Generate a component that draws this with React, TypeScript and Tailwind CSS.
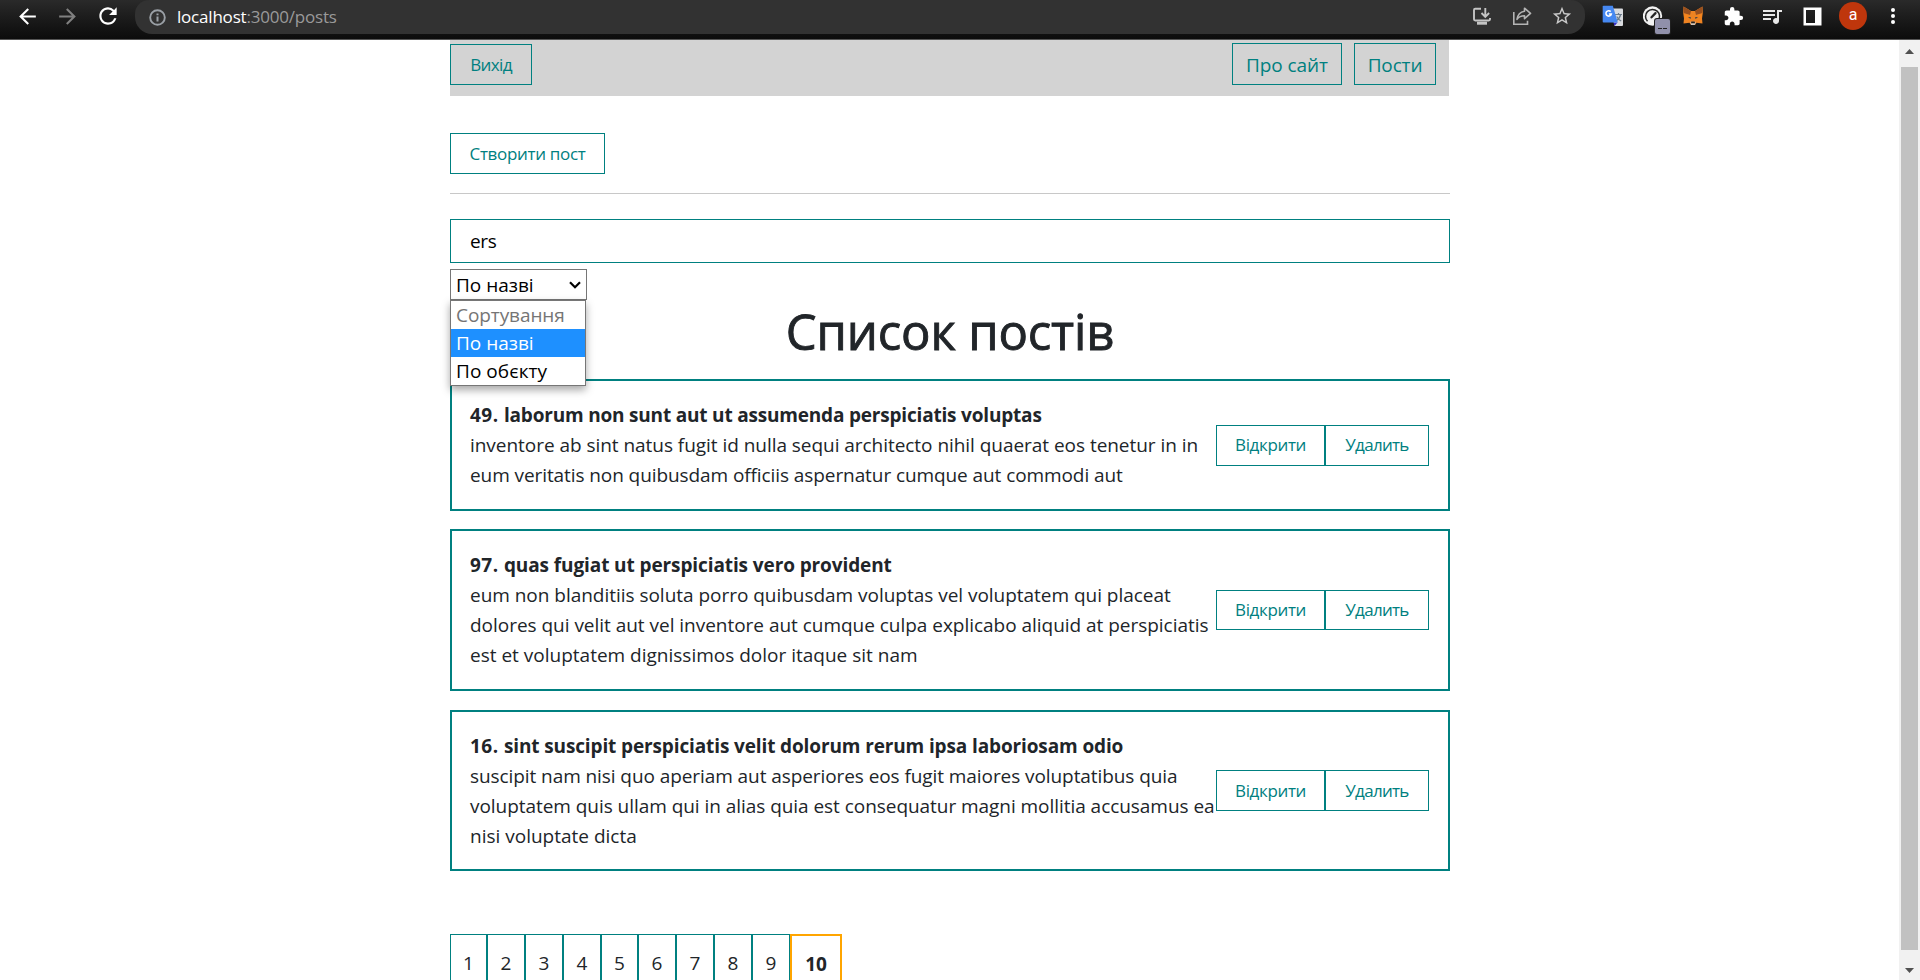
import type { ReactNode } from 'react'
import { MdArrowBack, MdArrowForward, MdExtension, MdQueueMusic, MdRefresh, MdStarOutline } from 'react-icons/md'

type Line = { text: string; tracking: string }
type Post = { id: number; title: Line; body: Line[]; box: string; button: string }

const posts: Post[] = [
  {
    id: 49,
    title: { text: 'laborum non sunt aut ut assumenda perspiciatis voluptas', tracking: 'tracking-[-0.190px]' },
    body: [
      { text: 'inventore ab sint natus fugit id nulla sequi architecto nihil quaerat eos tenetur in in', tracking: 'tracking-[-0.041px]' },
      { text: 'eum veritatis non quibusdam officiis aspernatur cumque aut commodi aut', tracking: 'tracking-[-0.084px]' },
    ],
    box: 'h-[132px]',
    button: 'h-[41px]',
  },
  {
    id: 97,
    title: { text: 'quas fugiat ut perspiciatis vero provident', tracking: 'tracking-[-0.100px]' },
    body: [
      { text: 'eum non blanditiis soluta porro quibusdam voluptas vel voluptatem qui placeat', tracking: 'tracking-[-0.026px]' },
      { text: 'dolores qui velit aut vel inventore aut cumque culpa explicabo aliquid at perspiciatis', tracking: 'tracking-[-0.026px]' },
      { text: 'est et voluptatem dignissimos dolor itaque sit nam', tracking: 'tracking-normal' },
    ],
    box: 'mt-[18px] h-[162px]',
    button: 'h-[40px]',
  },
  {
    id: 16,
    title: { text: 'sint suscipit perspiciatis velit dolorum rerum ipsa laboriosam odio', tracking: 'tracking-[-0.125px]' },
    body: [
      { text: 'suscipit nam nisi quo aperiam aut asperiores eos fugit maiores voluptatibus quia', tracking: 'tracking-[-0.077px]' },
      { text: 'voluptatem quis ullam qui in alias quia est consequatur magni mollitia accusamus ea', tracking: 'tracking-[-0.047px]' },
      { text: 'nisi voluptate dicta', tracking: 'tracking-normal' },
    ],
    box: 'mt-[19px] h-[161px]',
    button: 'h-[41px]',
  },
]

function Slot({ children }: { children: ReactNode }) {
  return <div className="flex h-8 w-10 shrink-0 items-center justify-center">{children}</div>
}

function BrowserBar() {
  return (
    <header className="flex h-10 shrink-0 items-start border-b border-[#555555] bg-linear-to-b from-[#2a2a2a] to-[#0c0c0c] pl-[8px]">
      <Slot><MdArrowBack className="mr-[2px] size-[25px] text-white" /></Slot>
      <Slot><MdArrowForward className="mr-[2px] size-[25px] text-[#808080]" /></Slot>
      <Slot><MdRefresh className="size-[26px] text-white" /></Slot>
      <div className="ml-[7px] flex h-[34px] w-[1450px] items-center rounded-b-[17px] rounded-tl-[14px] rounded-tr-[14px] bg-[#323232] pr-[3px] pl-[14px]">
        <svg className="size-[17px]" viewBox="0 0 17 17" fill="none">
          <circle cx="8.5" cy="8.5" r="7.3" stroke="#9aa0a6" strokeWidth="1.9" />
          <path d="M8.5 7.6v4.9M8.5 4.4v1.9" stroke="#9aa0a6" strokeWidth="2" />
        </svg>
        <div className="ml-[11px] flex-1 text-[17px] leading-[34px] tracking-[-0.2px] text-white">
          localhost<span className="text-[#9a9a9a]">:3000/posts</span>
        </div>
        <div className="flex h-[34px] items-start">
          <Slot>
            <svg className="size-5" viewBox="0 0 20 20" fill="none" stroke="#c4c4c4" strokeWidth="1.9">
              <path d="M9 2.700H3.200Q2 2.700 2 4v9.300q0 1.200 1.200 1.200h13.600q1.200 0 1.200-1.200V12" />
              <path d="M13.300 2v8M9.500 7l3.800 3.800L17.100 7" />
              <path d="M5 17.200h10" strokeWidth="3" />
            </svg>
          </Slot>
          <Slot>
            <svg className="size-5" viewBox="0 0 20 20" fill="none" stroke="#b4b4b4" strokeWidth="1.600">
              <path d="M1.800 6v12.200h13.700v-3.400" />
              <path d="M12.500 2.200l6 5.200-6 5.300V9.800c-3.300 0-5.700 1-7.500 3.600.6-4.300 3.300-7.600 7.500-8.200z" strokeLinejoin="round" />
            </svg>
          </Slot>
          <Slot><MdStarOutline className="size-[22px] text-[#c9c9c9]" /></Slot>
        </div>
      </div>
      <div className="ml-[8px] flex">
        <Slot>
          <svg className="size-[22px]" viewBox="0 0 22 22">
            <path d="M9 3.500h11q1 0 1 1v15.500q0 1-1 1h-7.500z" fill="#d8dade" />
            <path d="M13 9.500h7M16.500 8v1.500M18.700 9.500c-.7 3-2.500 5-5 6.500M14.700 11.500c1 2 2.500 3.500 4.500 4.500" stroke="#6d7c8c" strokeWidth="1.200" fill="none" />
            <path d="M11.500 17.500h4l-3 3.500z" fill="#3730c8" />
            <path d="M1.500.8h9.300l5 16.700H1.500q-.8 0-.8-.8V1.600q0-.8.800-.8z" fill="#4688f1" />
            <path d="M8.700 6.600A2.700 2.700 0 1 0 9.300 9H6.900" stroke="#fff" strokeWidth="1.600" fill="none" />
          </svg>
        </Slot>
        <div className="relative">
          <Slot>
            <svg className="size-5" viewBox="0 0 20 20">
              <circle cx="9.500" cy="10" r="9.700" fill="#f1f1f1" />
              <path d="M4.500 15.300a7 7 0 1 1 10.500-.5" stroke="#252525" strokeWidth="1.500" fill="none" />
              <path d="M8.500 11.300l4-4.200" stroke="#252525" strokeWidth="2.300" strokeLinecap="round" />
            </svg>
          </Slot>
          <div className="absolute top-[19px] left-[22px] flex h-[15px] w-[15px] items-center justify-center gap-[1.500px] rounded-[2px] bg-[#9090aa] pt-[4px] ring-1 ring-[#202020]">
            <span className="h-[1.500px] w-[3.500px] bg-[#222222]" />
            <span className="h-[1.500px] w-[3.500px] bg-[#222222]" />
          </div>
        </div>
        <Slot>
          <svg className="h-5 w-5" viewBox="0 0 20 20">
            <path d="M.5.500l7.500 4.500h4L19.500.500l.3 6.500-.8 5.500.5 5-6-.7-1.500 2.200H8l-1.500-2.200-6 .7.500-5L.200 7z" fill="#ee8322" />
            <path d="M.5.500l7.500 4.500-1 4L.700 7zM19.500.500L12 5l1 4 6.300-2z" fill="#99501f" />
            <path d="M1.300 8.500l5.700.5-5 3.500zM18.700 8.500L13 9l5 3.500z" fill="#f6851b" />
            <path d="M5 11l3 .3-.6 1.700zM15 11l-3 .3.600 1.700z" fill="#3b3f46" />
            <path d="M7.300 15.800h5.400l-.7 3.200H8z" fill="#d5c4b6" />
            <path d="M8.300 15.500h3.400l.3 1.700H8z" fill="#28221e" />
          </svg>
        </Slot>
        <Slot><MdExtension className="size-[21px] text-white" /></Slot>
        <Slot><MdQueueMusic className="mr-[2px] size-[24px] text-[#e8e8e8]" /></Slot>
        <Slot>
          <svg className="mr-px size-[19px]" viewBox="0 0 19 19">
            <path d="M.5.500h18v18H.5zM3 3v13h9V3z" fill="#fff" fillRule="evenodd" />
          </svg>
        </Slot>
        <Slot>
          <div className="flex size-7 items-center justify-center rounded-full bg-[#bf360c] pb-[2px] font-[Roboto] text-[16px] leading-none text-white">a</div>
        </Slot>
        <Slot>
          <svg className="mr-px h-5 w-1" viewBox="0 0 4 20" fill="#fff">
            <circle cx="2" cy="4" r="2" />
            <circle cx="2" cy="10" r="2" />
            <circle cx="2" cy="16" r="2" />
          </svg>
        </Slot>
      </div>
    </header>
  )
}

function SortSelect() {
  return (
    <div className="relative mt-[6px] h-[31px] w-[137px] border border-[#767676] bg-white pl-[5px] text-black">
      <div className="flex items-center justify-between pr-[5px] leading-[31px]">
        <span>По назві</span>
        <svg className="-mt-[2px] h-[8px] w-[12px]" viewBox="0 0 12 8" fill="none">
          <path d="M1 1.300l5 5 5-5" stroke="#000" strokeWidth="2.200" />
        </svg>
      </div>
      <div className="absolute top-[30px] -left-px w-[136px] border border-[#767676] bg-white leading-[28px] shadow-[0_4px_8px_rgba(0,0,0,0.35)]">
        <div className="h-[28px] pl-[5px] tracking-[-0.078px] text-[#757575]">Сортування</div>
        <div className="h-[28px] bg-[#1e90ff] pl-[5px] text-white">По назві</div>
        <div className="h-[28px] pl-[5px] tracking-[0.055px]">По обєкту</div>
      </div>
    </div>
  )
}

function PostItem({ post }: { post: Post }) {
  return (
    <article className={`flex items-center justify-between border-2 border-[#008080] pr-[19px] pl-[18px] ${post.box}`}>
      <div className="w-0 leading-[30px] whitespace-nowrap">
        <div className={`font-bold ${post.title.tracking}`}>
          <span className="tracking-[0.450px]">{post.id}. </span>
          {post.title.text}
        </div>
        {post.body.map((line) => (
          <div key={line.text} className={line.tracking}>{line.text}</div>
        ))}
      </div>
      <div className="flex text-[17px] text-[#008080]">
        <button className={`w-[109px] border border-[#008080] tracking-[-0.360px] ${post.button}`}>Відкрити</button>
        <button className={`w-[104px] border border-[#008080] tracking-[-0.700px] ${post.button}`}>Удалить</button>
      </div>
    </article>
  )
}

function Pagination() {
  const pages = [1, 2, 3, 4, 5, 6, 7, 8, 9]
  return (
    <nav className="mt-[63px] flex h-[70px] text-center leading-[56px]">
      {pages.map((page) => (
        <span key={page} className={`border border-[#008080] ${page === 1 || page === 5 ? 'w-[37px]' : 'w-[38px]'}`}>{page}</span>
      ))}
      <span className="w-[52px] border-2 border-[#ffa500] font-bold">10</span>
    </nav>
  )
}

function Scrollbar() {
  return (
    <div className="flex w-[21px] shrink-0 flex-col items-center bg-[#f1f1f1]">
      <div className="flex h-[27px] items-center pb-[4px]">
        <svg className="h-[5px] w-[9px]" viewBox="0 0 9 5"><path d="M4.500 0L9 5H0z" fill="#505050" /></svg>
      </div>
      <div className="h-[883px] w-[17px] bg-[#c1c1c1]" />
      <div className="flex h-[30px] items-center pt-[11px]">
        <svg className="h-[5px] w-[9px]" viewBox="0 0 9 5"><path d="M0 0h9L4.500 5z" fill="#505050" /></svg>
      </div>
    </div>
  )
}

export default function App() {
  return (
    <div className="flex h-[980px] w-[1920px] flex-col overflow-hidden bg-white font-['Open_Sans',sans-serif] text-[19px] text-[#212529]">
      <BrowserBar />
      <div className="flex min-h-0 flex-1">
        <main className="flex-1 overflow-hidden pl-[450px]">
          <div className="w-[1000px]">
            <nav className="flex h-14 w-[999px] items-start justify-between bg-[#d3d3d3] pt-[3px] pr-[13px] text-[#008080]">
              <button className="mt-px h-[41px] w-[82px] border border-[#008080] text-[17px] tracking-[-0.600px]">Вихід</button>
              <div className="flex gap-3">
                <a className="h-[42px] w-[110px] border border-[#008080] text-center leading-[42px] tracking-[-0.080px]">Про сайт</a>
                <a className="h-[42px] w-[82px] border border-[#008080] text-center leading-[42px] tracking-[-0.150px]">Пости</a>
              </div>
            </nav>
            <button className="mt-[37px] block h-[41px] w-[155px] border border-[#008080] text-[17px] tracking-[-0.320px] text-[#008080]">Створити пост</button>
            <div className="mt-[19px] h-px bg-[#c8c8c8]" />
            <div className="mt-[25px] h-[44px] border border-[#008080] pl-[19px] leading-[43px] tracking-[-0.300px] text-black">ers</div>
            <SortSelect />
            <h1 className="h-[79px] pt-px text-center text-[49px] leading-[60px] font-medium tracking-[-0.150px] [-webkit-text-stroke:0.9px_#212529]">Список постів</h1>
            {posts.map((post) => (
              <PostItem key={post.id} post={post} />
            ))}
            <Pagination />
          </div>
        </main>
        <Scrollbar />
      </div>
    </div>
  )
}
